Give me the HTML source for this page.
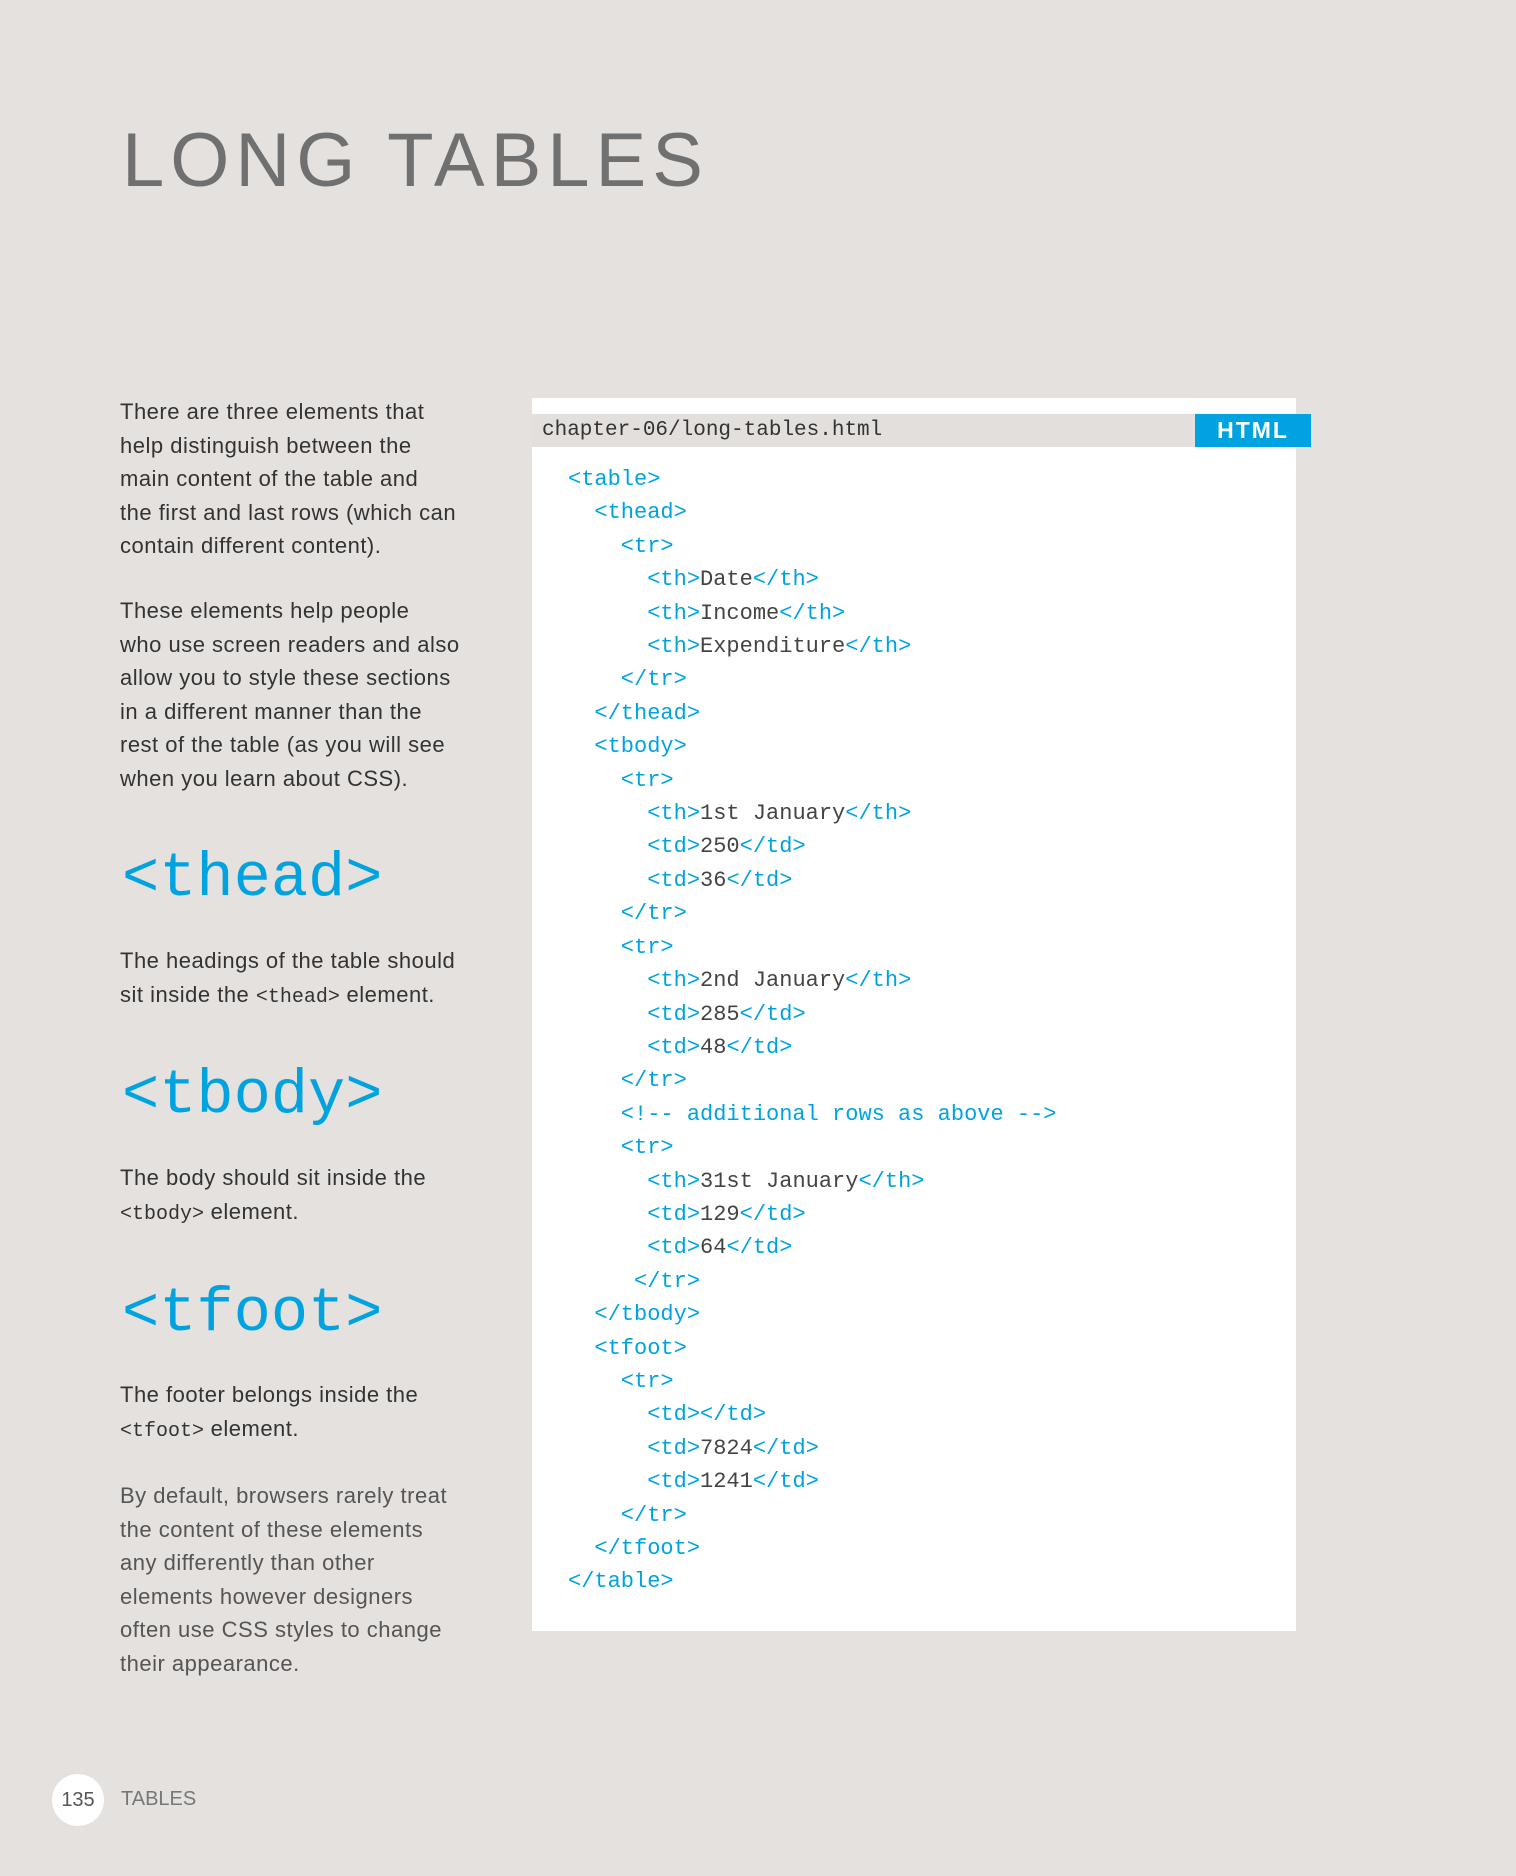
<!DOCTYPE html>
<html><head><meta charset="utf-8"><style>
body{margin:0;width:1516px;height:1876px;background:#e5e1de;position:relative;overflow:hidden;font-family:"Liberation Sans",sans-serif;}
.a{position:absolute;}
.title{left:122px;top:111px;font-size:76px;color:#707070;letter-spacing:6px;line-height:100px;}
.p{left:120px;font-size:22px;line-height:33.5px;color:#333;letter-spacing:0.5px;}
.p.g{color:#555;}
.p code,.m{font-family:"Liberation Mono",monospace;}
.p code{font-size:20px;letter-spacing:0;}
.h{left:122px;font-family:"Liberation Mono",monospace;font-size:62px;color:#00a3e0;line-height:70px;}
.box{left:532px;top:398px;width:764px;height:1233px;background:#fff;}
.bar{left:532px;top:414px;width:663px;height:33px;background:#e2dfdc;}
.bar span{position:absolute;left:10px;top:5px;font-family:"Liberation Mono",monospace;font-size:21px;color:#333;}
.badge{left:1195px;top:414px;width:116px;height:33px;background:#00a3e0;color:#fff;font-size:23px;font-weight:bold;letter-spacing:2px;text-align:center;line-height:33px;}
.code{left:568px;top:463px;font-family:"Liberation Mono",monospace;font-size:22px;line-height:33.4px;color:#00a3e0;white-space:pre;}
.code i{font-style:normal;color:#444;}
.circ{left:52px;top:1774px;width:52px;height:52px;border-radius:50%;background:#fff;color:#555;font-size:20px;text-align:center;line-height:52px;}
.ft{left:121px;top:1788px;font-size:20px;color:#777;}
</style></head><body>
<div class="a title">LONG TABLES</div>
<div class="a p" style="top:395px">There are three elements that<br>help distinguish between the<br>main content of the table and<br>the first and last rows (which can<br>contain different content).</div>
<div class="a p" style="top:594px">These elements help people<br>who use screen readers and also<br>allow you to style these sections<br>in a different manner than the<br>rest of the table (as you will see<br>when you learn about CSS).</div>
<div class="a h" style="top:844px">&lt;thead&gt;</div>
<div class="a p" style="top:944px">The headings of the table should<br>sit inside the <code>&lt;thead&gt;</code> element.</div>
<div class="a h" style="top:1061px">&lt;tbody&gt;</div>
<div class="a p" style="top:1161px">The body should sit inside the<br><code>&lt;tbody&gt;</code> element.</div>
<div class="a h" style="top:1279px">&lt;tfoot&gt;</div>
<div class="a p" style="top:1378px">The footer belongs inside the<br><code>&lt;tfoot&gt;</code> element.</div>
<div class="a p g" style="top:1479px">By default, browsers rarely treat<br>the content of these elements<br>any differently than other<br>elements however designers<br>often use CSS styles to change<br>their appearance.</div>
<div class="a box"></div>
<div class="a bar"><span>chapter-06/long-tables.html</span></div>
<div class="a badge">HTML</div>
<div class="a code">&lt;table&gt;
  &lt;thead&gt;
    &lt;tr&gt;
      &lt;th&gt;<i>Date</i>&lt;/th&gt;
      &lt;th&gt;<i>Income</i>&lt;/th&gt;
      &lt;th&gt;<i>Expenditure</i>&lt;/th&gt;
    &lt;/tr&gt;
  &lt;/thead&gt;
  &lt;tbody&gt;
    &lt;tr&gt;
      &lt;th&gt;<i>1st January</i>&lt;/th&gt;
      &lt;td&gt;<i>250</i>&lt;/td&gt;
      &lt;td&gt;<i>36</i>&lt;/td&gt;
    &lt;/tr&gt;
    &lt;tr&gt;
      &lt;th&gt;<i>2nd January</i>&lt;/th&gt;
      &lt;td&gt;<i>285</i>&lt;/td&gt;
      &lt;td&gt;<i>48</i>&lt;/td&gt;
    &lt;/tr&gt;
    &lt;!-- additional rows as above --&gt;
    &lt;tr&gt;
      &lt;th&gt;<i>31st January</i>&lt;/th&gt;
      &lt;td&gt;<i>129</i>&lt;/td&gt;
      &lt;td&gt;<i>64</i>&lt;/td&gt;
     &lt;/tr&gt;
  &lt;/tbody&gt;
  &lt;tfoot&gt;
    &lt;tr&gt;
      &lt;td&gt;&lt;/td&gt;
      &lt;td&gt;<i>7824</i>&lt;/td&gt;
      &lt;td&gt;<i>1241</i>&lt;/td&gt;
    &lt;/tr&gt;
  &lt;/tfoot&gt;
&lt;/table&gt;</div>
<div class="a circ">135</div>
<div class="a ft">TABLES</div>
</body></html>
